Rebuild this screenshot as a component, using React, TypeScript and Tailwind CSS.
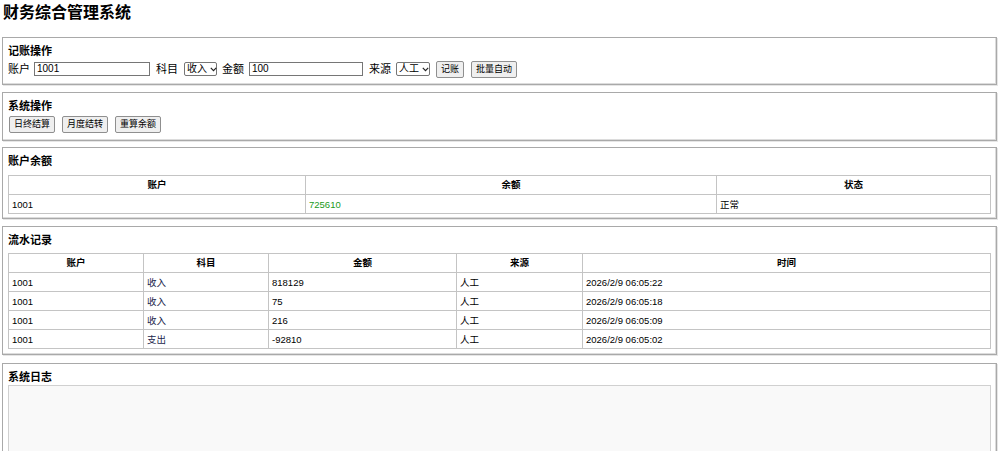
import React from 'react'

const font = { fontFamily: '"Liberation Sans", "Noto Sans CJK SC", sans-serif' }

type Txn = { acct: string; subject: string; amount: string; source: string; time: string }

const txns: Txn[] = [
  { acct: '1001', subject: '收入', amount: '818129', source: '人工', time: '2026/2/9 06:05:22' },
  { acct: '1001', subject: '收入', amount: '75', source: '人工', time: '2026/2/9 06:05:18' },
  { acct: '1001', subject: '收入', amount: '216', source: '人工', time: '2026/2/9 06:05:09' },
  { acct: '1001', subject: '支出', amount: '-92810', source: '人工', time: '2026/2/9 06:05:02' },
]

function Section({ title, children, className = '' }: { title: string; children: React.ReactNode; className?: string }) {
  return (
    <section className={`mx-[2px] mr-[3px] border border-[#a9a9a9] shadow-[inset_-1px_-1px_0_#dcdcdc,1px_1px_0_#e6e6e6] px-[5px] pt-[7px] ${className}`}>
      <h3 className="text-[11px] font-bold leading-[13px] text-black">{title}</h3>
      {children}
    </section>
  )
}

function Chevron() {
  return (
    <svg width="7" height="5" viewBox="0 0 7 5" className="ml-[3px] shrink-0">
      <path d="M0.8 0.8 L3.5 3.6 L6.2 0.8" fill="none" stroke="#222" strokeWidth="1.2" />
    </svg>
  )
}

function FakeSelect({ value, width }: { value: string; width: string }) {
  return (
    <div className={`flex h-[14px] ${width} shrink-0 items-center whitespace-nowrap border border-[#767676] rounded-[2px] bg-white pl-[2px] text-[10px] leading-none text-black`}>
      <span>{value}</span>
      <Chevron />
    </div>
  )
}

function Btn({ label }: { label: string }) {
  return (
    <button className="h-[17px] shrink-0 whitespace-nowrap rounded-[2px] border border-[#8f8f8f] bg-[#efefef] px-[4px] text-[9px] leading-none text-black">
      {label}
    </button>
  )
}

const th = 'border border-[#c4c4c4] text-center text-[9.5px] font-bold h-[19px] px-[3px]'
const td = 'border border-[#c4c4c4] text-left text-[9.5px] h-[19px] px-[3px] pt-[2px]'

export default function App() {
  return (
    <div style={font} className="min-h-[451px] bg-white text-black">
      <h1 className="pl-[3px] pt-[3px] text-[16px] font-bold leading-[20px] mb-[14px]">财务综合管理系统</h1>

      <Section title="记账操作" className="pb-[7px]">
        <div className="mt-[3px] flex h-[16px] items-center text-[11px]">
          <span>账户</span>
          <div className="ml-[4px] h-[14px] w-[116px] shrink-0 border border-[#767676] pl-[2px] text-[10px] leading-[12px]">1001</div>
          <span className="ml-[6px]">科目</span>
          <div className="ml-[6px]"><FakeSelect value="收入" width="w-[33px]" /></div>
          <span className="ml-[5px]">金额</span>
          <div className="ml-[5px] h-[14px] w-[114px] shrink-0 border border-[#767676] pl-[2px] text-[10px] leading-[12px]">100</div>
          <span className="ml-[6px]">来源</span>
          <div className="ml-[5px]"><FakeSelect value="人工" width="w-[34px]" /></div>
          <div className="ml-[6px] flex gap-[7px]">
            <Btn label="记账" />
            <Btn label="批量自动" />
          </div>
        </div>
      </Section>

      <Section title="系统操作" className="mt-[7px] pb-[7px]">
        <div className="mt-[3px] flex h-[17px] items-center gap-[7px] pl-[1px]">
          <Btn label="日终结算" />
          <Btn label="月度结转" />
          <Btn label="重算余额" />
        </div>
      </Section>

      <Section title="账户余额" className="mt-[6px] pb-[4px]">
        <table className="mt-[7px] w-[983px] border-collapse border border-[#a9a9a9]">
          <thead>
            <tr>
              <th className={`${th} w-[297px]`}>账户</th>
              <th className={`${th} w-[411px]`}>余额</th>
              <th className={th}>状态</th>
            </tr>
          </thead>
          <tbody>
            <tr>
              <td className={td}>1001</td>
              <td className={`${td} text-[#1a9a1a]`}>725610</td>
              <td className={td}>正常</td>
            </tr>
          </tbody>
        </table>
      </Section>

      <Section title="流水记录" className="mt-[7px] pb-[5px]">
        <table className="mt-[6px] w-[983px] border-collapse border border-[#a9a9a9]">
          <thead>
            <tr>
              <th className={`${th} w-[135px]`}>账户</th>
              <th className={`${th} w-[125px]`}>科目</th>
              <th className={`${th} w-[188px]`}>金额</th>
              <th className={`${th} w-[126px]`}>来源</th>
              <th className={th}>时间</th>
            </tr>
          </thead>
          <tbody>
            {txns.map((t, i) => (
              <tr key={i}>
                <td className={`${td} h-[19.5px]`}>{t.acct}</td>
                <td className={`${td} text-[#1b1f4d]`}>{t.subject}</td>
                <td className={td}>{t.amount}</td>
                <td className={td}>{t.source}</td>
                <td className={td}>{t.time}</td>
              </tr>
            ))}
          </tbody>
        </table>
      </Section>

      <Section title="系统日志" className="mt-[8px] pb-[6px]">
        <div className="mt-[1px] h-[150px] w-[983px] border border-[#d0d0d0] bg-[#f9f9f9]" />
      </Section>
    </div>
  )
}
